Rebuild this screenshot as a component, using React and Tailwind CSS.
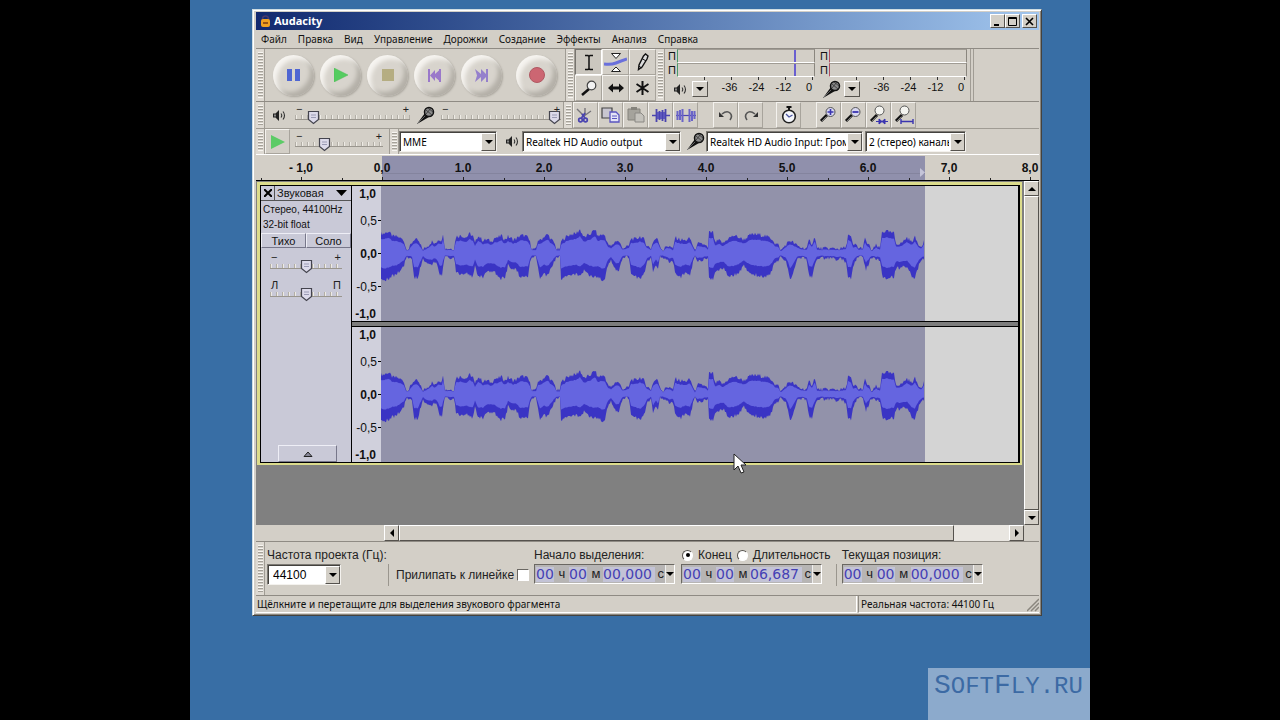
import { useState } from "react";
import clsx from "clsx";

const MENU = ["Файл", "Правка", "Вид", "Управление", "Дорожки", "Создание", "Эффекты", "Анализ", "Справка"];
const SECONDS = ["- 1,0", "0,0", "1.0", "2.0", "3.0", "4.0", "5.0", "6.0", "7,0", "8,0"];

// [x, peak above zero, peak below zero]
const PEAKS = [
  [0, 20, 24], [3, 20, 27], [7, 22, 25], [12, 17, 22], [16, 17, 21], [20, 15, 15], [23, 13, 12], [25, 5, 5], [28, 5, 4],
  [31, 11, 6], [33, 14, 24], [37, 13, 24], [39, 9, 16], [42, 4, 4], [45, 6, 9], [48, 9, 11], [51, 12, 11], [54, 9, 8],
  [57, 14, 14], [59, 14, 23], [61, 13, 21], [62, 21, 12], [64, 5, 4], [73, 5, 4], [75, 17, 19], [80, 18, 22], [85, 16, 20],
  [89, 20, 23], [92, 17, 22], [94, 10, 10], [97, 18, 24], [102, 13, 23], [106, 14, 18], [110, 12, 17], [114, 16, 19],
  [116, 15, 22], [120, 18, 25], [124, 14, 25], [127, 17, 12], [132, 14, 16], [136, 15, 17], [139, 18, 24], [143, 18, 24],
  [147, 16, 22], [149, 11, 10], [151, 5, 3], [155, 4, 3], [157, 14, 15], [159, 13, 25], [163, 17, 20], [167, 19, 22],
  [170, 14, 16], [173, 11, 8], [176, 4, 4], [179, 4, 3], [180, 12, 27], [184, 16, 24], [189, 19, 22], [195, 20, 20],
  [199, 24, 24], [203, 16, 17], [207, 18, 20], [210, 20, 22], [214, 24, 24], [217, 17, 22], [220, 19, 26], [224, 18, 26],
  [227, 9, 11], [230, 7, 6], [235, 13, 18], [238, 12, 16], [241, 6, 5], [245, 6, 3], [248, 8, 4], [250, 15, 20],
  [254, 14, 22], [259, 17, 26], [263, 14, 20], [266, 8, 9], [270, 5, 4], [272, 12, 20], [275, 15, 10], [277, 14, 17],
  [279, 8, 4], [282, 3, 3], [286, 8, 7], [289, 7, 9], [292, 4, 7], [294, 16, 20], [299, 14, 24], [304, 13, 20],
  [309, 15, 22], [312, 8, 9], [314, 2, 3], [316, 10, 8], [320, 9, 7], [324, 9, 6], [327, 5, 5], [328, 21, 24],
  [332, 21, 26], [334, 11, 18], [338, 13, 16], [342, 10, 14], [347, 15, 23], [353, 18, 22], [358, 16, 18], [363, 14, 13],
  [370, 19, 20], [377, 19, 22], [383, 18, 23], [388, 16, 22], [392, 14, 14], [394, 10, 8], [397, 9, 7], [400, 3, 3],
  [404, 8, 6], [407, 11, 14], [409, 13, 27], [412, 11, 18], [416, 8, 6], [420, 6, 4], [426, 5, 7], [428, 13, 22],
  [431, 10, 24], [434, 17, 12], [436, 5, 5], [440, 5, 4], [450, 5, 5], [460, 5, 6], [465, 6, 8], [467, 19, 24],
  [470, 16, 24], [472, 8, 12], [475, 9, 6], [478, 5, 3], [482, 6, 5], [484, 15, 12], [485, 12, 16], [488, 8, 9],
  [491, 3, 4], [495, 8, 6], [499, 5, 6], [501, 22, 22], [506, 22, 26], [513, 20, 23], [515, 10, 14], [520, 10, 15],
  [526, 16, 12], [530, 12, 22], [534, 16, 25], [537, 10, 14], [540, 7, 8], [543, 13, 5],
];

function sampleAt(x) {
  let i = 0;
  while (i < PEAKS.length - 2 && PEAKS[i + 1][0] <= x) i++;
  const [x0, t0, b0] = PEAKS[i];
  const [x1, t1, b1] = PEAKS[i + 1];
  const k = Math.min(1, (x - x0) / (x1 - x0));
  return [t0 + (t1 - t0) * k, b0 + (b1 - b0) * k];
}

function noise(n) {
  const s = Math.sin(n * 12.9898) * 43758.5453;
  return s - Math.floor(s) - 0.5;
}

function wavePath(top, bottom, jitter) {
  const up = [];
  const down = [];
  for (let x = 0; x <= 543; x++) {
    const [t, b] = sampleAt(x);
    const n = jitter * noise(x + 1);
    const m = jitter * noise(x + 700);
    up.push(`${x} ${(67.5 - Math.max(2, t * top + n)).toFixed(1)}`);
    down.push(`${x} ${(67.5 + Math.max(2, b * bottom + m)).toFixed(1)}`);
  }
  return `M${up.join("L")}L${down.reverse().join("L")}Z`;
}

const OUTER = wavePath(1, 1, 4);
const RMS = wavePath(0.72, 0.56, 1);

function Svg({ w, h, children, className }) {
  return (
    <svg width={w} height={h} viewBox={`0 0 ${w} ${h}`} className={clsx("shrink-0", className)} aria-hidden>
      {children}
    </svg>
  );
}

function SpeakerIcon() {
  return (
    <Svg w={14} h={13}>
      <path d="M1 4.5h2.5L7 1v11L3.500 8.500H1z" fill="#222" />
      <path d="M2 5.500h2v2H2z" fill="#888" />
      <path d="M9 4.500q1.500 2 0 4M11 2.500q3 4 0 8" fill="none" stroke="#333" strokeWidth="1.100" />
    </Svg>
  );
}

function MicIcon() {
  return (
    <Svg w={19} h={19}>
      <path d="M1 18L9 7l4 4z" fill="#111" />
      <path d="M1 18l9-9" stroke="#777" strokeWidth="0.800" />
      <circle cx="13" cy="6" r="4.500" fill="#8a8a8a" stroke="#111" strokeWidth="1.500" />
      <path d="M10 4l6 5M12 2l5 4M10 8l5-6" stroke="#333" strokeWidth="0.800" />
    </Svg>
  );
}

function Caret({ up, left, right }) {
  let d = "M0 1h8L4 5z";
  if (up) d = "M0 5h8L4 1z";
  if (left) d = "M6 -1v8L2 3z";
  if (right) d = "M2 -1v8l4-4z";
  return (
    <svg width="8" height="6" viewBox="0 0 8 6" className="shrink-0 overflow-visible" aria-hidden>
      <path d={d} fill="#000" />
    </svg>
  );
}

function Lens({ children }) {
  return (
    <Svg w={20} h={20}>
      <path d="M8 10L2 16" stroke="#111" strokeWidth="3" />
      <path d="M7.500 11.500L3 16" stroke="#999" strokeWidth="0.800" />
      {children}
    </Svg>
  );
}

const RAISED = "border border-t-white border-l-white border-r-[#55524d] border-b-[#55524d] bg-[#d3cfc7]";

function Grabber() {
  return (
    <div className="flex w-[9px] shrink-0 justify-center border-r border-[#a09c94] bg-[#dedad3] py-[3px]">
      <div className="w-[5px] bg-[repeating-linear-gradient(to_bottom,#f8f6f2_0_1px,#a5a199_1px_2px,#d3cfc7_2px_3px)]" />
    </div>
  );
}

function Slider({ label, start, className, low = "−", high = "+" }) {
  const [value, setValue] = useState(start);
  return (
    <div className={clsx("relative h-[26px] shrink-0 text-[11px] leading-[13px]", className)}>
      <div className="flex justify-between px-px text-[#222]">
        <span>{low}</span>
        <span>{high}</span>
      </div>
      <div className="h-[5px] border-b border-[#9a968e] bg-[repeating-linear-gradient(to_right,#b2aea6_0_1px,#eeebe5_1px_2px,transparent_2px_6px)]" />
      <div className="pointer-events-none absolute top-[8px] right-[13px] left-0">
        <div className="w-[13px]" style={{ marginLeft: `${value}%` }}>
          <Svg w={13} h={15}>
            <path d="M1.500 1.500h10v8l-5 4-5-4z" fill="#dcdaea" stroke="#44444e" strokeWidth="1.200" />
            <path d="M4 5h5M4 7.500h5" stroke="#9a9ab4" />
          </Svg>
        </div>
      </div>
      <input
        type="range"
        aria-label={label}
        value={value}
        onChange={(e) => setValue(e.target.value)}
        className="absolute inset-0 h-full w-full cursor-pointer opacity-0"
      />
    </div>
  );
}

function Combo({ label, options, id, className, big }) {
  return (
    <div className={clsx("relative h-[21px] shrink-0 border border-t-[#7d7a74] border-l-[#7d7a74] border-r-[#f4f2ee] border-b-[#f4f2ee] bg-[#c8c4bc]", className)}>
      <select
        id={id}
        aria-label={label}
        className={clsx(
          "h-full w-full appearance-none overflow-hidden border-t border-l border-[#44423e] bg-white pr-4 text-black outline-none",
          big ? "pl-[4px] font-['Liberation_Sans'] text-[12px]" : "pl-[2px] text-[10px]"
        )}
      >
        {options.map((o) => (
          <option key={o}>{o}</option>
        ))}
      </select>
      <span className={clsx("pointer-events-none absolute top-px right-0 bottom-0 flex w-[15px] items-center justify-center", RAISED)}>
        <Caret />
      </span>
    </div>
  );
}

function Transport({ label, children }) {
  return (
    <button
      type="button"
      aria-label={label}
      className="flex size-[41px] items-center justify-center rounded-full bg-[#d8d4cd] shadow-[inset_4px_4px_4px_#f6f4f0,inset_-4px_-4px_4px_#b4b0a8,1px_1px_2px_#aaa69e]"
    >
      {children}
    </button>
  );
}

function ToolButton({ label, pressed, small, children }) {
  return (
    <button
      type="button"
      aria-label={label}
      className={clsx(
        "flex shrink-0 items-center justify-center border",
        small ? "w-[25px]" : "h-[26px] w-[27px]",
        pressed
          ? "border-t-[#77746e] border-l-[#77746e] border-r-white border-b-white bg-[#cbc7bf]"
          : "border-t-[#f4f2ee] border-l-[#f4f2ee] border-r-[#a8a49c] border-b-[#a8a49c]"
      )}
    >
      {children}
    </button>
  );
}

function Meter({ label, icon, accent, peak }) {
  return (
    <div className="w-[148px] shrink-0 font-['Liberation_Sans'] text-[11px]">
      {[0, 1].map((ch) => (
        <div key={ch} className="flex h-[14px] items-center leading-[13px]">
          <span className="w-[10px] text-center">П</span>
          <div className={clsx("flex h-full flex-1 border-t border-r border-b border-l border-t-[#a09c94] border-r-[#8a867e] border-b-white", accent)}>
            {peak && <div className="ml-[116px] w-[2px] bg-[#6a5fd0]" />}
          </div>
        </div>
      ))}
      <div className="flex h-[3px] pl-[37px]">
        {[0, 1, 2, 3].map((t) => (
          <div key={t} className="w-[27px] border-l border-[#333]" />
        ))}
        <div className="border-l border-[#333]" />
      </div>
      <div className="flex h-[18px] items-center">
        <span className="flex w-[25px] justify-center">{icon}</span>
        <button type="button" aria-label={label} className={clsx("flex size-[16px] items-center justify-center", RAISED)}>
          <Caret />
        </button>
        <div className="flex flex-1 pr-[3px] pb-[3px] pl-[8px]">
          <span className="w-[27px] text-center">-36</span>
          <span className="w-[27px] text-center">-24</span>
          <span className="w-[27px] text-center">-12</span>
          <span className="flex-1 text-right">0</span>
        </div>
      </div>
    </div>
  );
}

function TimeField({ label, seconds }) {
  const cell = "h-[15px] bg-[#c3c3d6] font-['DejaVu_Sans'] text-[14px] text-[#4540b4] outline-none";
  return (
    <div className="flex h-[20px] w-[141px] items-center border border-t-[#6a6762] border-l-[#6a6762] border-r-white border-b-white bg-[#b7b5b4] pl-px font-['Liberation_Sans'] text-[13px] text-[#222]">
      <input aria-label={`${label}, часы`} defaultValue="00" className={clsx("w-[18px]", cell)} />
      <span className="w-[15px] pl-px text-center">ч</span>
      <input aria-label={`${label}, минуты`} defaultValue="00" className={clsx("w-[18px]", cell)} />
      <span className="w-[16px] pl-[2px] text-center">м</span>
      <input aria-label={`${label}, секунды`} defaultValue={seconds} className={clsx("w-[52px]", cell)} />
      <span className="w-[9px] text-right">с</span>
      <button type="button" aria-label={`${label}, формат`} className="ml-auto flex h-full w-[9px] items-center justify-center border-l border-[#eee] bg-[#cfcbc4]">
        <Caret />
      </button>
    </div>
  );
}

function TitleBar() {
  const btn = clsx("flex h-[14px] w-[15px] items-center justify-center", RAISED);
  return (
    <header className="flex h-[18px] items-center bg-linear-to-r from-[#12296f] to-[#a2c6ee] pr-[2px] pl-[4px]">
      <Svg w={11} h={14}>
        <path d="M2.500 7V5a3 3 0 0 1 6 0v2" fill="none" stroke="#4a3a6a" strokeWidth="1.500" />
        <rect x="1" y="5" width="9" height="8" rx="2" fill="#f0a020" />
        <path d="M3 9h5" stroke="#7a3a10" strokeWidth="1.500" />
      </Svg>
      <h1 className="ml-[3px] flex-1 font-['Noto_Sans'] text-[11px] leading-[16px] font-bold text-white">Audacity</h1>
      <button type="button" aria-label="Свернуть" className={btn}>
        <Svg w={9} h={9}><path d="M1 8h5" stroke="#000" strokeWidth="2" /></Svg>
      </button>
      <button type="button" aria-label="Развернуть" className={btn}>
        <Svg w={9} h={9}><path d="M.500 .500h8v8h-8zM0 1.500h9" fill="none" stroke="#000" /></Svg>
      </button>
      <button type="button" aria-label="Закрыть" className={clsx("ml-[2px]", btn)}>
        <Svg w={9} h={9}><path d="M1 1l7 7M8 1L1 8" stroke="#000" strokeWidth="1.600" /></Svg>
      </button>
    </header>
  );
}

function ControlRow() {
  return (
    <div className="flex h-[53px] border-t border-[#8f8b84]">
      <Grabber />
      <div className="flex items-center gap-[6px] border-r border-[#a09c94] pr-[8px] pl-[8px]">
        <Transport label="Пауза">
          <Svg w={13} h={12}><path d="M0 0h5v12H0zM8 0h5v12H8z" fill="#5066d2" /></Svg>
        </Transport>
        <Transport label="Воспроизвести">
          <Svg w={14} h={14}><path d="M0 0l14 7-14 7z" fill="#55cc60" stroke="#48b855" strokeWidth="0.500" /></Svg>
        </Transport>
        <Transport label="Стоп">
          <Svg w={12} h={12}><path d="M0 0h12v12H0z" fill="#b5ad82" /></Svg>
        </Transport>
        <Transport label="В начало">
          <Svg w={13} h={13}><path d="M0 0h2v13H0zM2 6.500L7 1v4l5-4.500v12L7 8v4zM11 0h2v13h-2z" fill="#9a78ca" /></Svg>
        </Transport>
        <Transport label="В конец">
          <Svg w={13} h={13}><path d="M0 0l6 5V0l5 5V0h2v13h-2V8l-5 5V8l-6 5 2-6.500z" fill="#9580cc" /></Svg>
        </Transport>
        <span className="w-[2px]" />
        <Transport label="Записать">
          <Svg w={16} h={16}><circle cx="8" cy="8" r="7.500" fill="#cc6672" stroke="#b05862" /></Svg>
        </Transport>
      </div>
      <Grabber />
      <div className="grid grid-cols-3 content-start">
        <ToolButton label="Выделение" pressed>
          <Svg w={12} h={17}><path d="M2 1.500h3l1 1 1-1h3M2 15.500h3l1-1 1 1h3M6 2v13" fill="none" stroke="#111" strokeWidth="1.500" /></Svg>
        </ToolButton>
        <ToolButton label="Огибающая">
          <Svg w={23} h={21}>
            <path d="M0 12q7 1 12-1t11-4" fill="none" stroke="#6a70dc" strokeWidth="3" />
            <path d="M7.500 1.500h9l-4.500 5zM7.500 19.500h9L12 15z" fill="#fff" stroke="#222" />
          </Svg>
        </ToolButton>
        <ToolButton label="Рисование">
          <Svg w={12} h={18}><path d="M6.500 3l2-2 2.500 2-1 3-5 8-3.500 2.500.500-4.500z" fill="#ddd" stroke="#111" strokeWidth="1.400" /><path d="M5 5.500l4 2.500M2 13l2.500 2" stroke="#111" /></Svg>
        </ToolButton>
        <ToolButton label="Масштаб">
          <Svg w={16} h={16}><path d="M8 9l-7 6" stroke="#111" strokeWidth="2.500" /><circle cx="10.500" cy="5.500" r="4.300" fill="#f2f2f2" stroke="#444" strokeWidth="1.200" /></Svg>
        </ToolButton>
        <ToolButton label="Перемещение">
          <Svg w={16} h={10}><path d="M0 5l5-4.500v3h6v-3L16 5l-5 4.500v-3H5v3z" fill="#111" /></Svg>
        </ToolButton>
        <ToolButton label="Мульти-инструмент">
          <Svg w={13} h={14}><path d="M6.500 0v14M0.500 3l12 8M12.500 3l-12 8" stroke="#111" strokeWidth="2" /></Svg>
        </ToolButton>
      </div>
      <Grabber />
      <div className="flex gap-[4px] border-r border-[#a09c94] pr-[3px] pl-[2px]">
        <Meter label="Меню индикатора воспроизведения" icon={<SpeakerIcon />} accent="border-l-[#4a9a6a]" peak />
        <Meter label="Меню индикатора записи" icon={<MicIcon />} accent="border-l-[#b05060]" />
      </div>
      <div className="ml-[2px] border-l border-[#a09c94]" />
    </div>
  );
}

function EditRow() {
  return (
    <div className="flex h-[27px] border-t border-[#8f8b84]">
      <Grabber />
      <span className="flex w-[30px] items-center justify-center pr-[2px]"><SpeakerIcon /></span>
      <Slider label="Громкость воспроизведения" start={12} className="w-[115px]" />
      <span className="flex w-[31px] items-center justify-center"><MicIcon /></span>
      <Slider label="Громкость записи" start={100} className="w-[120px]" />
      <span className="w-[3px] border-r border-[#a09c94]" />
      <Grabber />
      <ToolButton label="Вырезать" small>
        <Svg w={19} h={17}>
          <path d="M1 2l6 6M9 1v7M15 4L8 9" stroke="#77757a" strokeWidth="1.400" />
          <circle cx="4.500" cy="13" r="1.800" fill="none" stroke="#4a44b0" strokeWidth="1.700" />
          <circle cx="9.500" cy="13" r="1.800" fill="none" stroke="#4a44b0" strokeWidth="1.700" />
          <path d="M5.500 11L9 6M6 7l3 4" stroke="#4a44b0" strokeWidth="1.800" />
        </Svg>
      </ToolButton>
      <ToolButton label="Копировать" small>
        <Svg w={20} h={16}>
          <path d="M1 1h10v10H1z" fill="#c8c6d0" stroke="#444" strokeWidth="1.200" />
          <path d="M9 5h6l3 3v7H9z" fill="#e4e4f6" stroke="#5a54c0" strokeWidth="1.300" />
          <path d="M11 9h5M11 11.500h5" stroke="#5a54c0" />
        </Svg>
      </ToolButton>
      <ToolButton label="Вставить" small>
        <Svg w={18} h={16}>
          <path d="M1 2h12v11H1z" fill="#a5a39c" stroke="#85837c" />
          <path d="M4 0h6v3H4z" fill="#85837c" />
          <path d="M8 6h6l3 3v6H8z" fill="#c4c2bc" stroke="#8a8884" />
        </Svg>
      </ToolButton>
      <ToolButton label="Обрезать" small>
        <Svg w={18} h={13}><path d="M0 6.500h18" stroke="#4a44b0" strokeWidth="1.500" /><path d="M4 3h10v7H4z" fill="#6a64c8" /><path d="M4.500 0v13M7.500 2v9M10.500 1v11M13.500 0v13" stroke="#4a44b0" strokeWidth="1.800" /></Svg>
      </ToolButton>
      <ToolButton label="Заглушить" small>
        <Svg w={20} h={13}><path d="M0 6.500h20" stroke="#4a44b0" strokeWidth="1.200" /><path d="M1.500 2v9M4 1v10M6.500 0v13M13.500 0v13M16 2v10M18.500 2v8" stroke="#6a64c8" strokeWidth="2" /></Svg>
      </ToolButton>
      <span className="w-[15px]" />
      <ToolButton label="Отменить" small>
        <Svg w={14} h={11}><path d="M3 4q5-4 8-1t0 7" fill="none" stroke="#555" strokeWidth="1.600" /><path d="M0 2v5h5z" fill="#333" /></Svg>
      </ToolButton>
      <ToolButton label="Вернуть" small>
        <Svg w={14} h={11}><path d="M11 4Q6 0 3 3t0 7" fill="none" stroke="#555" strokeWidth="1.600" /><path d="M14 2v5H9z" fill="#333" /></Svg>
      </ToolButton>
      <span className="w-[13px]" />
      <ToolButton label="Синхронизация" small>
        <Svg w={16} h={18}>
          <path d="M5.500 1h5M8 1v3" stroke="#111" strokeWidth="2" />
          <circle cx="8" cy="10.500" r="6.300" fill="#f4f6fa" stroke="#222" strokeWidth="1.600" />
          <path d="M5 8l3 3 3.500-2" fill="none" stroke="#4a54a0" strokeWidth="1.300" />
        </Svg>
      </ToolButton>
      <span className="w-[15px]" />
      <ToolButton label="Приблизить" small>
        <Lens><circle cx="11.500" cy="7" r="4.500" fill="#d8d8f0" stroke="#555" /><path d="M8.500 7h6M11.500 4v6" stroke="#3a34b0" strokeWidth="1.600" /></Lens>
      </ToolButton>
      <ToolButton label="Отдалить" small>
        <Lens><circle cx="11.500" cy="7" r="4.500" fill="#d8d8f0" stroke="#555" /><path d="M8.500 7h6" stroke="#3a34b0" strokeWidth="1.800" /></Lens>
      </ToolButton>
      <ToolButton label="Уместить выделенное" small>
        <Lens><circle cx="10.500" cy="5.500" r="4.500" fill="#f4f4f0" stroke="#555" /><path d="M7 16.500h12M10 14l3 2.500-3 2.500zM16 14l-3 2.500 3 2.500z" fill="#3a34b0" stroke="#3a34b0" /></Lens>
      </ToolButton>
      <ToolButton label="Уместить проект" small>
        <Lens><circle cx="10.500" cy="5.500" r="4.500" fill="#f4f4f0" stroke="#555" /><path d="M7 16.500h12M7 14v5M19 14v5" stroke="#3a34b0" strokeWidth="1.400" /></Lens>
      </ToolButton>
    </div>
  );
}

function DeviceRow() {
  return (
    <div className="flex h-[26px] border-t border-[#a09c94]">
      <Grabber />
      <ToolButton label="Воспроизвести на скорости" small>
        <Svg w={14} h={14}><path d="M0 0l14 7-14 7z" fill="#5ccb66" /></Svg>
      </ToolButton>
      <span className="w-[5px]" />
      <Slider label="Скорость воспроизведения" start={31} className="w-[88px]" />
      <span className="w-[7px] border-r border-[#a09c94]" />
      <Grabber />
      <div className="flex items-center">
        <Combo label="Интерфейс" options={["MME"]} className="w-[98px]" />
        <span className="flex w-[25px] justify-center pl-[4px]"><SpeakerIcon /></span>
        <Combo label="Устройство воспроизведения" options={["Realtek HD Audio output"]} className="w-[159px]" />
        <span className="flex w-[25px] justify-center pl-[4px]"><MicIcon /></span>
        <Combo label="Устройство записи" options={["Realtek HD Audio Input: Громкость"]} className="w-[157px]" />
        <span className="w-[2px]" />
        <Combo label="Каналы записи" options={["2 (стерео) каналы"]} className="w-[101px]" />
      </div>
    </div>
  );
}

function Ruler() {
  return (
    <div className="relative h-[27px] overflow-hidden border-t border-b border-t-white border-b-black font-['Liberation_Sans'] text-[12px] font-bold">
      <div className="absolute top-px bottom-0 left-[126px] w-[543px] bg-[#9090ac]">
        <div className="mt-[17px] h-px bg-[#84849e]" />
      </div>
      <div className="relative flex h-full pl-[4px]">
        {SECONDS.map((s) => (
          <div key={s} className="flex w-[81px] shrink-0 flex-col justify-between border-l border-transparent">
            <span className="pt-[4px] text-center leading-[18px]">{s}</span>
            <span className="flex h-[3px] items-end justify-between">
              <i className="h-[2px] w-px bg-[#222]" />
              <i className="h-[3px] w-px bg-[#222]" />
              <i className="w-px" />
            </span>
          </div>
        ))}
      </div>
      <div className="absolute top-[13px] left-[664px]">
        <Svg w={5} h={9}><path d="M0 0l5 4.500L0 9z" fill="#c4c4d8" /></Svg>
      </div>
    </div>
  );
}

function Channel() {
  const tick = <i className="ml-px h-px w-[3px] bg-black" />;
  return (
    <div className="flex h-[135px]">
      <div className="flex w-[29px] shrink-0 flex-col bg-[#d0d0dc] font-['Liberation_Sans'] text-[12px]">
        <span className="flex h-[15px] items-center justify-end pr-[5px] font-bold">1,0</span>
        <span className="flex h-[39px] items-center justify-end">0,5{tick}</span>
        <span className="flex h-[27px] items-center justify-end font-bold">0,0{tick}</span>
        <span className="flex h-[39px] items-center justify-end">-0,5{tick}</span>
        <span className="flex h-[15px] items-center justify-end pr-[5px] font-bold">-1,0</span>
      </div>
      <div className="w-[544px] shrink-0 bg-[#9292aa]">
        <Svg w={544} h={135}>
          <path d={OUTER} fill="#3a34c4" />
          <path d={RMS} fill="#6565e0" />
        </Svg>
      </div>
      <div className="flex-1 bg-[#d4d4d4]" />
    </div>
  );
}

function TrackPanel() {
  const raised = "border border-t-[#eeeef6] border-l-[#eeeef6] border-r-[#77778a] border-b-[#77778a]";
  return (
    <section className="flex w-[90px] shrink-0 flex-col bg-[#c9c9d7] font-['Liberation_Sans'] text-[11px] leading-[15px]">
      <div className="flex h-[15px] border-b border-[#555]">
        <button type="button" aria-label="Закрыть дорожку" className="flex w-[14px] items-center justify-center border-r border-[#555]">
          <Svg w={8} h={8}><path d="M0 0l8 8M8 0L0 8" stroke="#000" strokeWidth="2" /></Svg>
        </button>
        <button type="button" className="flex flex-1 items-center justify-between pr-[4px] pl-[2px]">
          Звуковая
          <Svg w={11} h={6}><path d="M0 0h11L5.500 6z" fill="#000" /></Svg>
        </button>
      </div>
      <p className="h-[32px] pt-px pl-[2px] text-[10px] whitespace-nowrap">
        Стерео, 44100Hz
        <br />
        32-bit float
      </p>
      <div className="flex h-[15px] leading-[12px]">
        <button type="button" className={clsx("flex-1", raised)}>Тихо</button>
        <button type="button" className={clsx("flex-1", raised)}>Соло</button>
      </div>
      <div className="flex flex-col gap-[2px] pt-[3px] pl-[9px]">
        <Slider label="Усиление" start={50} className="w-[72px]" />
        <Slider label="Панорама" start={50} low="Л" high="П" className="w-[72px]" />
      </div>
      <button type="button" aria-label="Свернуть дорожку" className={clsx("mt-auto ml-[17px] flex h-[17px] w-[59px] items-center justify-center", raised)}>
        <Svg w={10} h={6}><path d="M1 5.500h8L5 1z" fill="#889" stroke="#222" /></Svg>
      </button>
    </section>
  );
}

function SelectionBar() {
  const [mode, setMode] = useState("end");
  const head = "flex h-[18px] items-center";
  return (
    <div className="flex h-[54px] border-t border-[#8f8b84] font-['Liberation_Sans'] text-[12px] text-[#222]">
      <Grabber />
      <div className="flex items-stretch pt-[4px]">
        <div className="w-[123px] pl-[2px]">
          <label htmlFor="rate" className={head}>Частота проекта (Гц):</label>
          <Combo id="rate" options={["44100"]} big className="w-[74px]" />
        </div>
        <div className="mt-[18px] flex h-[22px] items-center border-l border-[#9a968e] pl-[7px]">
          <label htmlFor="snap" className="w-[121px] whitespace-nowrap">Прилипать к линейке</label>
          <input id="snap" type="checkbox" className="size-[12px] appearance-none border border-t-[#6a6762] border-l-[#6a6762] border-r-white border-b-white bg-white checked:bg-[#555]" />
        </div>
        <div className="ml-[5px] w-[147px]">
          <span className={head}>Начало выделения:</span>
          <TimeField label="Начало выделения" seconds="00,000" />
        </div>
        <div>
          <div className={clsx(head, "pl-px")}>
            {[["end", "Конец"], ["length", "Длительность"]].map(([id, text]) => (
              <label key={id} className="mr-[5px] flex items-center gap-[5px]">
                <input
                  type="radio"
                  name="mode"
                  checked={mode === id}
                  onChange={() => setMode(id)}
                  className="flex size-[11px] appearance-none items-center justify-center rounded-full border border-t-[#55524d] border-l-[#55524d] border-r-white border-b-white bg-white before:size-[4px] before:rounded-full checked:before:bg-black"
                />
                {text}
              </label>
            ))}
          </div>
          <TimeField label="Конец выделения" seconds="06,687" />
        </div>
        <div className="mt-[18px] h-[22px] border-l border-[#9a968e]" />
        <div className="ml-[5px]">
          <span className={head}>Текущая позиция:</span>
          <TimeField label="Текущая позиция" seconds="00,000" />
        </div>
      </div>
    </div>
  );
}

export default function App() {
  const arrow = clsx("flex items-center justify-center", RAISED);
  return (
    <div className="flex h-screen justify-center overflow-hidden bg-black">
      <div className="relative aspect-[5/4] h-full min-w-0 bg-[#386ea5] pt-[9px] pr-[48px] pl-[62px] font-['Noto_Sans',sans-serif] text-[10px] text-[#111]">
        <main className="border border-t-[#cfdde2] border-l-[#cfdde2] border-r-[#44423e] border-b-[#44423e] bg-[#d3cfc7] pt-[2px] pr-[2px] pb-[2px] pl-[3px] shadow-[inset_1px_1px_0_#fff,inset_-1px_-1px_0_#8a867e]">
          <TitleBar />
          <nav className="flex h-[18px] items-center gap-[11px] pl-[5px]">
            {MENU.map((m) => (
              <button key={m} type="button">{m}</button>
            ))}
          </nav>
          <ControlRow />
          <EditRow />
          <DeviceRow />
          <Ruler />
          <div className="flex h-[344px]">
            <div className="min-w-0 flex-1 bg-[#808080] pt-px pr-[2px] pl-px">
              <div className="border-t-[3px] border-r-2 border-b-2 border-l-[3px] border-[#dcdc8c]">
                <div className="flex border border-r-2 border-black">
                  <TrackPanel />
                  <div className="flex-1 border-l border-black">
                    <Channel />
                    <div className="h-[6px] border-y border-black bg-[#7c7c7c]" />
                    <Channel />
                  </div>
                </div>
              </div>
            </div>
            <div className="flex w-[15px] flex-col bg-[#e6e3de]">
              <button type="button" aria-label="Вверх" className={clsx("h-[15px]", arrow)}><Caret up /></button>
              <div className={clsx("flex-1", RAISED)} />
              <button type="button" aria-label="Вниз" className={clsx("h-[15px]", arrow)}><Caret /></button>
            </div>
          </div>
          <div className="flex h-[16px] pr-[15px] pl-[128px]">
            <button type="button" aria-label="Влево" className={clsx("w-[15px]", arrow)}><Caret left /></button>
            <div className="flex flex-1 bg-[#e9e6e1]">
              <div className={clsx("w-[91%]", RAISED)} />
            </div>
            <button type="button" aria-label="Вправо" className={clsx("w-[15px]", arrow)}><Caret right /></button>
          </div>
          <SelectionBar />
          <footer className="flex h-[18px] border-t border-[#8f8b84] leading-[16px]">
            <p className="flex-1 border-r border-b border-white pl-px">Щёлкните и перетащите для выделения звукового фрагмента</p>
            <p className="ml-px flex w-[181px] justify-between border-b border-l border-b-white border-l-[#8f8b84] pl-[2px]">
              Реальная частота: 44100 Гц
              <Svg w={12} h={16}><path d="M0 15L12 3M4 15l8-8M8 15l4-4" stroke="#8a867e" strokeWidth="1.500" /></Svg>
            </p>
          </footer>
        </main>

        <div className="absolute right-0 bottom-0 h-[52px] w-[162px] bg-[#8caacc] pl-[6px] font-['Liberation_Mono'] text-[24px] leading-[35px] whitespace-nowrap text-[#3c6aa4]">
          <span className="text-[28px]">S</span>OFT<span className="text-[28px]">F</span>LY.RU
        </div>

        <Svg w={14} h={22} className="absolute top-[453px] left-[543px]">
          <path d="M1 1v16l4-4 3 7 3-1-3-7h5z" fill="#fff" stroke="#222" />
        </Svg>
      </div>
    </div>
  );
}
